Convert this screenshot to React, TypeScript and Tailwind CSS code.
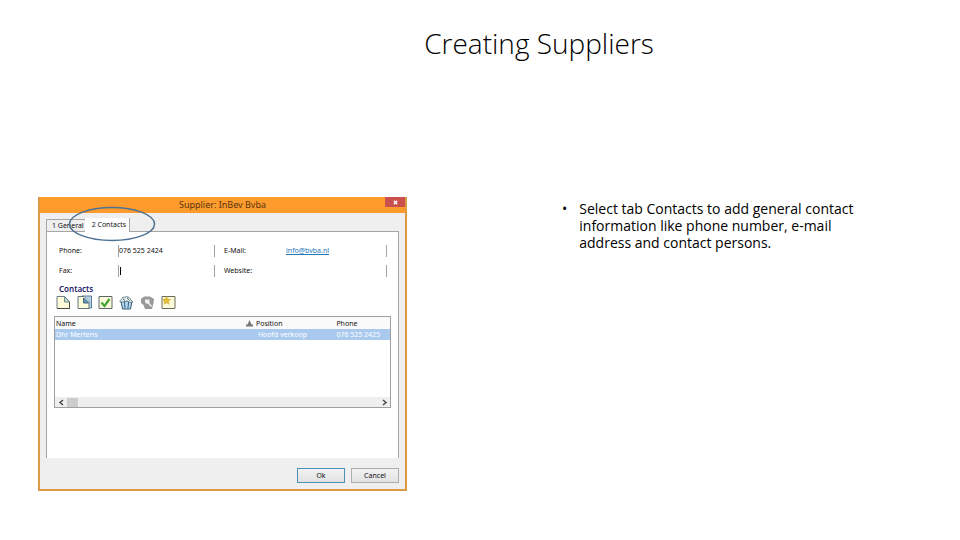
import type { ReactNode } from "react";
import { clsx } from "clsx";

const CONTACTS = [
  { name: "Dhr Mertens", position: "Hoofd verkoop", phone: "076 525 2425" },
];

function NewIcon() {
  return (
    <svg viewBox="0 0 15 15" className="size-[15px]">
      <path d="M1 1.5h7.5L13.5 7v6.5H1z" fill="#fdfbd8" stroke="#6f7f88" />
      <path d="M8.5 1.5V7h5z" fill="#c9dcc0" stroke="#6f8c94" />
      <path d="M1 13.5h12.5V7" fill="none" stroke="#4a4a44" />
    </svg>
  );
}

function CopyIcon() {
  return (
    <svg viewBox="0 0 15 15" className="size-[15px]">
      <path d="M4.500 1h10v12h-4z" fill="#b9d3e6" stroke="#587c98" />
      <path d="M1 1.500h6l5 5v7H1z" fill="#fdfbd8" stroke="#5f7480" />
      <path d="M6.500 3v5H12V3z" fill="#a9c6d8" />
      <path d="M6.500 3v5H11.500z" fill="#6d97b3" stroke="#3f6880" />
    </svg>
  );
}

function CheckIcon() {
  return (
    <svg viewBox="0 0 15 15" className="size-[15px]">
      <path d="M1 1.5h13v12H1z" fill="#fbf9dc" stroke="#5c6a66" />
      <path d="M3.5 7.5l3 3.5 5-7" fill="none" stroke="#46a336" strokeWidth="2.2" />
    </svg>
  );
}

function TrashIcon() {
  return (
    <svg viewBox="0 0 15 15" className="size-[15px]">
      <path d="M2 6h11l-1.500 8h-8z" fill="#b4dbf2" stroke="#31556b" />
      <path d="M5.500 7l.5 6M9.500 7L9 13" stroke="#315a78" />
      <path d="M1 7c0-3 2-2 3-5 2 1 3-1 5 0 2 0 2 3 5 5l-3 .5-3-1.500-4 1z" fill="#e4ecec" stroke="#64808c" />
      <path d="M4 4l2 1.500M8 3l2.500 2.500" stroke="#53686f" />
    </svg>
  );
}

function RestoreIcon() {
  return (
    <svg viewBox="0 0 15 15" className="size-[15px]">
      <path d="M1 4l3-2.500h6L14 4l-.5 4-1.500 6H5L3.500 10 1 8z" fill="#999" />
      <path d="M5 4.500h4.500V8L8.500 9 6 8.500 5 7z" fill="#efefef" />
      <path d="M8.500 8l3 3.500" stroke="#efefef" strokeWidth="1.500" />
    </svg>
  );
}

function FavouriteIcon() {
  return (
    <svg viewBox="0 0 15 15" className="size-[15px]">
      <path d="M1 1.5h13v12H1z" fill="#fdfbd8" stroke="#6c6a58" />
      <path
        d="M5.5 1.5l1.2 2.6 2.8.3-2 2 .5 2.8-2.5-1.4L3 9.200l.5-2.800-2-2 2.800-.3z"
        fill="#e3bf35"
        stroke="#c9a233"
        strokeWidth=".5"
      />
    </svg>
  );
}

const TOOLS = [
  { name: "New", icon: NewIcon },
  { name: "Copy", icon: CopyIcon },
  { name: "Confirm", icon: CheckIcon },
  { name: "Delete", icon: TrashIcon },
  { name: "Restore", icon: RestoreIcon },
  { name: "Favourite", icon: FavouriteIcon },
];

const FIELD = "h-3 w-full min-w-0 border-x border-[#9aa3a8] bg-white text-[7px] leading-3 outline-none";

function TitleBar() {
  return (
    <div className="relative flex h-4 items-center justify-center bg-[#fd9b2d]">
      <h2 className="text-[9px] leading-3 text-[#5a3510]">Supplier: InBev Bvba</h2>
      <button
        type="button"
        aria-label="Close"
        className="absolute top-0 right-0 flex h-[10px] w-5 items-center justify-center bg-[#c9504c]"
      >
        <svg viewBox="0 0 6 6" className="size-[5px]">
          <path d="M1 1l4 4M5 1L1 5" stroke="#fff" strokeWidth="1.6" />
        </svg>
      </button>
    </div>
  );
}

function Tabs() {
  return (
    <div role="tablist" className="relative flex items-end text-[7px] leading-3">
      <button
        type="button"
        role="tab"
        aria-selected="false"
        className="h-3 border-t border-l border-[#a5a5a5] bg-[#efefef] pr-px pl-[5px]"
      >
        1 General
      </button>
      <button
        type="button"
        role="tab"
        aria-selected="true"
        className="-mb-px h-[14px] border-r border-[#a5a5a5] bg-white pr-[3px] pl-[7px]"
      >
        2 Contacts
      </button>
      {/* highlight around the active tab */}
      <svg viewBox="0 0 88 36" className="pointer-events-none absolute -top-3 left-[22px] h-9 w-[88px]">
        <ellipse cx="44" cy="18" rx="42.500" ry="16.500" fill="none" stroke="#4f7195" strokeWidth="1.500" />
      </svg>
    </div>
  );
}

function ContactForm() {
  return (
    <form className="grid grid-cols-[60px_97fr_71px_101fr] items-center gap-y-2 px-[11px]">
      <label htmlFor="phone" className="pl-px">Phone:</label>
      <input id="phone" defaultValue="076 525 2424" className={FIELD} />
      <label htmlFor="email" className="pl-[9px]">E-Mail:</label>
      <div className="h-3 border-r border-[#a5a5a5]">
        <a id="email" href="mailto:info@bvba.nl" className="text-[#2678b8] underline">info@bvba.nl</a>
      </div>
      <label htmlFor="fax" className="pl-px">Fax:</label>
      <div className="relative">
        <input id="fax" className={FIELD} />
        <span className="absolute top-[2px] left-[2px] h-2 w-px bg-black" />
      </div>
      <label htmlFor="website" className="pl-[9px]">Website:</label>
      <input id="website" className={clsx(FIELD, "border-l-0")} />
    </form>
  );
}

function ScrollArrow({ path, label }: { path: string; label: string }) {
  return (
    <button type="button" aria-label={label}>
      <svg viewBox="0 0 6 7" className="h-[7px] w-[6px]">
        <path d={path} fill="none" stroke="#444" strokeWidth="1.400" />
      </svg>
    </button>
  );
}

function ContactList() {
  return (
    <div className="mx-[7px] flex h-[92px] flex-col border border-[#a0a0a0]">
      <table className="w-full table-fixed border-collapse text-left leading-[11px]">
        <thead>
          <tr className="h-3 bg-[#fafafa]">
            <th className="w-[57%] pl-px font-normal">Name</th>
            <th className="w-[27%] font-normal">
              <span className="flex items-center gap-[3px]">
                <svg viewBox="0 0 7 7" className="size-[7px]">
                  <path d="M3.500 0L5.500 4.500H7V6.500H0V4.500h1.500z" fill="#777" />
                </svg>
                Position
              </span>
            </th>
            <th className="font-normal">Phone</th>
          </tr>
        </thead>
        <tbody>
          {CONTACTS.map((contact) => (
            <tr key={contact.name} className="h-[11px] bg-[#a9caee] text-white">
              <td className="pl-px">{contact.name}</td>
              <td className="pl-3">{contact.position}</td>
              <td>{contact.phone}</td>
            </tr>
          ))}
        </tbody>
      </table>
      <div className="mt-auto flex h-[10px] items-center bg-[#efefef] pr-[2px] pl-[3px]">
        <ScrollArrow path="M5 1L2 3.500L5 6" label="Scroll left" />
        <span className="ml-[3px] h-[9px] w-[11px] bg-[#cdcdcd]" />
        <span className="ml-auto flex">
          <ScrollArrow path="M1 1L4 3.500L1 6" label="Scroll right" />
        </span>
      </div>
    </div>
  );
}

function DialogButton({ primary = false, children }: { primary?: boolean; children: ReactNode }) {
  return (
    <button
      type="button"
      className={clsx(
        "h-[15px] w-12 border bg-linear-to-b from-[#f2f2f2] to-[#e2e2e2] text-[7px] leading-3",
        primary ? "border-[#4a90b8]" : "border-[#adadad]",
      )}
    >
      {children}
    </button>
  );
}

function SupplierDialog() {
  return (
    <section className="border-2 border-t-0 border-[#dc9a44] bg-[#efefef] font-['Noto_Sans',sans-serif] text-[7px] leading-3 text-[#111]">
      <TitleBar />
      <div className="px-[6px] pt-[5px] pb-[6px]">
        <Tabs />
        <div className="h-[227px] border border-b-0 border-[#a5a5a5] bg-white pt-[13px]">
          <ContactForm />
          <h3 className="mt-[6px] pl-3 text-[8px] leading-3 font-semibold text-[#1d1d6b]">Contacts</h3>
          <div className="mb-[6px] flex gap-[6px] pl-[9px]">
            {TOOLS.map((tool) => (
              <button key={tool.name} type="button" aria-label={tool.name}>
                <tool.icon />
              </button>
            ))}
          </div>
          <ContactList />
        </div>
        <div className="mt-[10px] flex justify-end gap-[6px]">
          <DialogButton primary>Ok</DialogButton>
          <DialogButton>Cancel</DialogButton>
        </div>
      </div>
    </section>
  );
}

export default function App() {
  return (
    <main className="min-h-screen bg-white font-['Open_Sans',sans-serif] text-black">
      <header className="pt-6 pl-[118px]">
        <h1 className="text-center text-[28px] leading-[38px] font-light">Creating Suppliers</h1>
      </header>
      <div className="mt-[135px] grid grid-cols-[369fr_302fr] items-start gap-[155px] pr-24 pl-[38px]">
        <SupplierDialog />
        <ul className="list-none pt-[3px] text-[14px] leading-[17px]">
          <li className="flex gap-3">
            <span>•</span>
            <span>
              Select tab Contacts to add general contact information like phone number, e-mail address and contact
              persons.
            </span>
          </li>
        </ul>
      </div>
    </main>
  );
}
